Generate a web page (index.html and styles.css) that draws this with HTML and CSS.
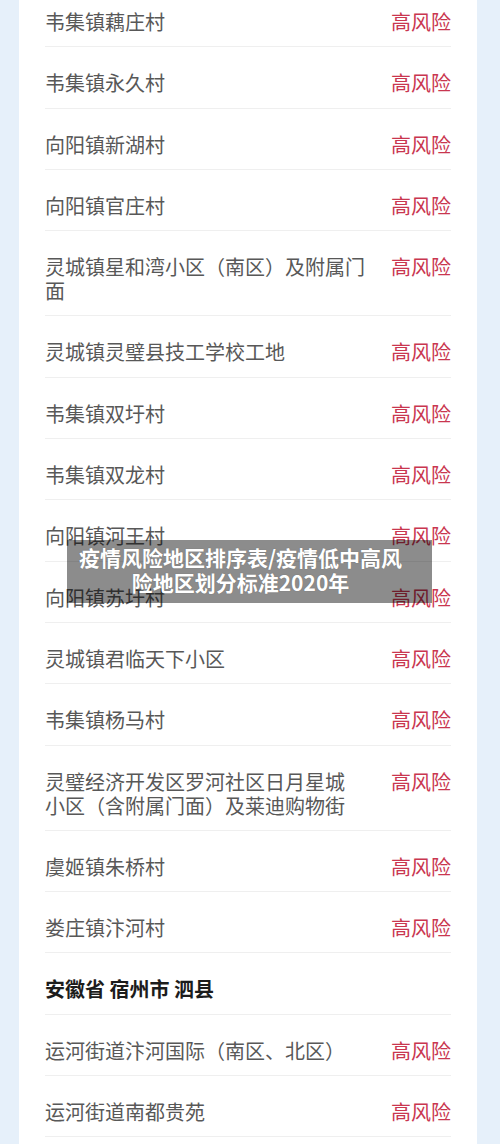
FILE: index.html
```html
<!DOCTYPE html>
<html lang="zh-CN">
<head>
    <meta charset="UTF-8">
    <meta name="viewport" content="width=device-width, initial-scale=1.0">
    <title>疫情风险地区排序表</title>
    <link rel="stylesheet" href="styles.css">
</head>
<body>
    <div class="page">
        <div class="card">
            <div class="row"><span class="name">韦集镇藕庄村</span><span class="risk">高风险</span></div>
            <div class="row"><span class="name">韦集镇永久村</span><span class="risk">高风险</span></div>
            <div class="row"><span class="name">向阳镇新湖村</span><span class="risk">高风险</span></div>
            <div class="row"><span class="name">向阳镇官庄村</span><span class="risk">高风险</span></div>
            <div class="row"><span class="name">灵城镇星和湾小区（南区）及附属门面</span><span class="risk">高风险</span></div>
            <div class="row"><span class="name">灵城镇灵璧县技工学校工地</span><span class="risk">高风险</span></div>
            <div class="row"><span class="name">韦集镇双圩村</span><span class="risk">高风险</span></div>
            <div class="row"><span class="name">韦集镇双龙村</span><span class="risk">高风险</span></div>
            <div class="row"><span class="name">向阳镇河王村</span><span class="risk">高风险</span></div>
            <div class="row"><span class="name">向阳镇苏圩村</span><span class="risk">高风险</span></div>
            <div class="row"><span class="name">灵城镇君临天下小区</span><span class="risk">高风险</span></div>
            <div class="row"><span class="name">韦集镇杨马村</span><span class="risk">高风险</span></div>
            <div class="row"><span class="name">灵璧经济开发区罗河社区日月星城<br>小区（含附属门面）及莱迪购物街</span><span class="risk">高风险</span></div>
            <div class="row"><span class="name">虞姬镇朱桥村</span><span class="risk">高风险</span></div>
            <div class="row"><span class="name">娄庄镇汴河村</span><span class="risk">高风险</span></div>
            <div class="row area">安徽省 宿州市 泗县</div>
            <div class="row"><span class="name">运河街道汴河国际（南区、北区）</span><span class="risk">高风险</span></div>
            <div class="row"><span class="name">运河街道南都贵苑</span><span class="risk">高风险</span></div>
        </div>

        <!-- 图片标题浮层 -->
        <div class="caption">疫情风险地区排序表/疫情低中高风险地区划分标准2020年</div>
    </div>
</body>
</html>
```

FILE: styles.css
```css
body {
    margin: 0;
    background-color: #e6f0fa;
    font-family: "Noto Sans CJK SC", "Noto Sans", sans-serif;
    overflow: hidden;
}
.page {
    position: relative;
    height: 1144px;
    overflow: hidden;
}
.card {
    background-color: #fff;
    margin: -14px 23px 0 19px;
    padding: 0 26px 40px 26px;
}
.row {
    display: flex;
    justify-content: space-between;
    align-items: flex-start;
    gap: 25px;
    padding: 24px 0 12.3px;
    border-bottom: 1px solid #efefef;
    font-size: 20px;
    line-height: 24px;
}
.name {
    flex: 1;
    color: #585858;
}
.risk {
    color: #c9364f;
    white-space: nowrap;
}
.area {
    color: #1c1c1c;
    font-weight: bold;
}
.caption {
    position: absolute;
    top: 540px;
    left: 67px;
    width: 329px;
    padding: 5px 27px 8px 9px;
    background-color: rgba(0, 0, 0, 0.45);
    color: #fff;
    font-size: 21px;
    font-weight: bold;
    line-height: 25px;
    text-align: center;
    text-shadow: 0 0 1px rgba(0, 0, 0, 0.3);
}
```
